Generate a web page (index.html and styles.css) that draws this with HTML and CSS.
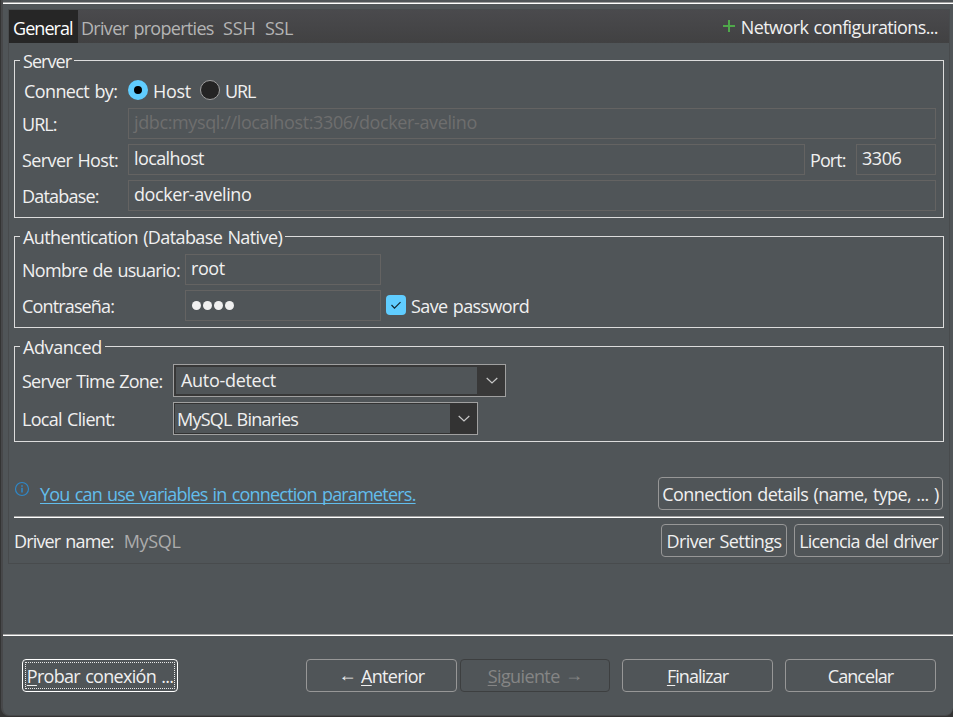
FILE: index.html
```html
<!DOCTYPE html>
<html lang="es">
<head>
<meta charset="utf-8">
<title>Connection settings</title>
<link rel="stylesheet" href="styles.css">
</head>
<body>
<div class="window">
  <div class="rule"></div>
  <main class="panel">
    <nav class="tabs">
      <span class="tab active t9">General</span>
      <span class="tab props t6">Driver properties</span>
      <span class="tab ssh t1">SSH</span>
      <span class="tab ssl t4">SSL</span>
      <span class="network">
        <svg class="plus" width="13" height="13" viewBox="0 0 13 13"><path d="M6 0h2v12h-2zM1 5h12v2H1z" fill="#4fa84a"/></svg>
        <span class="t5">Network configurations...</span>
      </span>
    </nav>
    <div class="content">
      <fieldset class="server">
        <legend class="t9">Server</legend>
        <div class="row connect">
          <span class="label t5">Connect by:</span>
          <span class="radio on"></span><span class="choice t3">Host</span>
          <span class="radio"></span><span class="choice t10">URL</span>
        </div>
        <div class="row">
          <span class="label t9">URL:</span>
          <span class="field disabled t3">jdbc:mysql://localhost:3306/docker-avelino</span>
        </div>
        <div class="row">
          <span class="label t5">Server Host:</span>
          <span class="field t5">localhost</span>
          <span class="port-label t9">Port:</span>
          <span class="field port t4">3306</span>
        </div>
        <div class="row">
          <span class="label t7">Database:</span>
          <span class="field t4">docker-avelino</span>
        </div>
      </fieldset>
      <fieldset class="auth">
        <legend class="t5">Authentication (Database Native)</legend>
        <div class="row">
          <span class="label t6">Nombre de usuario:</span>
          <span class="field t4">root</span>
        </div>
        <div class="row">
          <span class="label t8">Contraseña:</span>
          <span class="field password"><i></i><i></i><i></i><i></i></span>
          <span class="check"><svg width="20" height="20" viewBox="0 0 20 20"><path d="M5.5 10l3 3.2 6-6" fill="none" stroke="#12262e" stroke-width="1.2"/></svg></span>
          <span class="save t5">Save password</span>
        </div>
      </fieldset>
      <fieldset class="advanced">
        <legend class="t4">Advanced</legend>
        <div class="row">
          <span class="label t7">Server Time Zone:</span>
          <span class="combo zone"><span class="value t3">Auto-detect</span><svg width="12" height="8" viewBox="0 0 12 8"><path d="M.7 1l5.3 5 5.3-5" fill="none" stroke="#c8c8c8" stroke-width="1.2"/></svg></span>
        </div>
        <div class="row">
          <span class="label t6">Local Client:</span>
          <span class="combo client"><span class="value t7">MySQL Binaries</span><svg width="12" height="8" viewBox="0 0 12 8"><path d="M.7 1l5.3 5 5.3-5" fill="none" stroke="#c8c8c8" stroke-width="1.2"/></svg></span>
        </div>
      </fieldset>
      <div class="hint">
        <svg class="info" width="16" height="16" viewBox="0 0 16 16"><circle cx="8" cy="8" r="6.5" fill="none" stroke="#2f88c8" stroke-width="1.2"/><path d="M8 4.2v1.6M8 6.8v4.8" stroke="#2f88c8" stroke-width="1.6"/></svg>
        <a class="link t7">You can use variables in connection parameters.</a>
        <span class="button details t5">Connection details (name, type, ... )</span>
      </div>
      <div class="rule"></div>
      <div class="driver">
        <span class="t8">Driver name:</span>
        <span class="name t3">MySQL</span>
        <span class="button settings t5">Driver Settings</span>
        <span class="button license t7">Licencia del driver</span>
      </div>
    </div>
  </main>
  <div class="rule bottom-rule"></div>
  <footer class="footer">
    <span class="button test t6"><span><u>P</u>robar conexión ...</span></span>
    <span class="button wide prev t6"><span><span class="arrow">←</span> <u>A</u>nterior</span></span>
    <span class="button next t5"><span><u>S</u>iguiente <span class="arrow">→</span></span></span>
    <span class="button wide finish t9"><span><u>F</u>inalizar</span></span>
    <span class="button wide t9">Cancelar</span>
  </footer>
</div>
</body>
</html>
```
FILE: styles.css
```css
* { box-sizing: border-box; }
body {
  margin: 0;
  width: 953px;
  height: 717px;
  overflow: hidden;
  background: #343434;
  color: #f0f0f0;
  font: 18px/25px "Open Sans", "Noto Sans", sans-serif;
  white-space: nowrap;
  word-spacing: 1.2px;
}
.window {
  display: flex;
  flex-direction: column;
  height: 716px;
  margin-left: 1px;
  padding-top: 2px;
  background: #505558;
  border: solid #47484a;
  border-width: 0 0 1px 2px;
  border-radius: 0 0 8px 8px;
}
.rule {
  flex: none;
  height: 2px;
  background: #fff;
  border-top: 1px solid #a2a2a2;
}
/* Tracking steps */
.t1 { letter-spacing: -.12px; }
.t3 { letter-spacing: -.3px; }
.t4 { letter-spacing: -.42px; }
.t5 { letter-spacing: -.61px; }
.t6 { letter-spacing: -.7px; }
.t7 { letter-spacing: -.79px; }
.t8 { letter-spacing: -.85px; }
.t9 { letter-spacing: -.95px; }
.t10 { letter-spacing: -1.1px; }

.panel {
  flex: none;
  width: 942px;
  height: 555px;
  margin: 5px 0 0 5px;
  border: 1px solid #484b4d;
}
.tabs {
  display: flex;
  height: 33px;
  line-height: 36px;
  background: linear-gradient(#4a4a4d, #414142);
  color: #b4b4b4;
}
.tab.active { width: 69px; padding-left: 4px; background: #262626; color: #fff; }
.tab.props { width: 141px; padding-left: 3px; }
.tab.ssh { width: 42px; padding-left: 4px; }
.tab.ssl { padding-left: 4px; }
.network { display: flex; margin-left: auto; padding-right: 11px; color: #f0f0f0; line-height: 35px; }
.plus { margin: 10px 6px 0 0; }

.content { padding: 5px 5px 0 5px; }
fieldset {
  min-width: 0;
  margin: 0 0 6px;
  padding: 0 7px;
  border: 1px solid #dcdcdc;
}
legend { margin-left: -2px; padding: 2px 3px 0; line-height: 23px; }
.server { height: 170px; }
.auth { height: 104px; }
.advanced { height: 108px; }
.row { display: flex; align-items: center; height: 31px; margin-bottom: 5px; }
.label { flex: none; padding-top: 2px; }
.server .label { width: 106px; }
.auth .label { width: 163px; }
.advanced .label { width: 151px; }
.row.connect { height: 34px; margin-bottom: 1px; }
.connect .label { padding-left: 2px; }
.radio {
  width: 20px;
  height: 20px;
  border: 1px solid #a0a0a0;
  border-radius: 50%;
  background: #242424;
}
.radio.on { border: 6px solid #60cdff; background: #000; }
.choice { padding: 2px 0 0 5px; }
.choice + .radio { margin-left: 9px; }
.field {
  flex: 1;
  height: 31px;
  padding: 0 5px;
  border: 1px solid #646362;
  line-height: 27px;
}
.field.disabled { color: #6e6e6e; letter-spacing: -.38px; }
.port-label { width: 51px; padding: 2px 0 0 5px; }
.field.port { flex: none; width: 80px; }
.auth .row:nth-of-type(1) { margin-top: 5px; }
.auth .field { flex: none; width: 196px; }
.password { display: flex; align-items: center; gap: 2px; padding-left: 6px; }
.password i { width: 9px; height: 9px; border-radius: 50%; background: #f0f0f0; }
.check {
  display: flex;
  width: 20px;
  height: 20px;
  margin: -1px 0 0 5px;
  border-radius: 4px;
  background: #60cdff;
}
.save { padding: 2px 0 0 5px; }
.advanced .row { height: 33px; }
.advanced .row:nth-of-type(1) { margin-top: 5px; }
.combo {
  display: flex;
  align-items: center;
  height: 33px;
  padding-right: 7px;
  border: 1px solid #a0a0a0;
  background: #333;
}
.zone { width: 333px; background: #383838; }
.client { width: 305px; }
.value { flex: 1; margin-right: 8px; background: #505558; }
.zone .value { height: 27px; margin: 0 9px 0 2px; padding-left: 5px; line-height: 27px; }
.client .value { height: 29px; margin-left: 1px; padding-left: 2px; line-height: 31px; }

.hint { display: flex; height: 68px; padding-top: 29px; }
.info { margin-top: 4px; }
.link { margin: 5px 0 0 10px; color: #62bdec; text-decoration: underline; text-underline-offset: 2px; text-decoration-thickness: 1px; text-decoration-skip-ink: none; }
.button {
  height: 33px;
  border: 1px solid #979797;
  border-radius: 4px;
  line-height: 33px;
  text-align: center;
}
.details { width: 285px; margin: 0 1px 0 auto; }
.driver { display: flex; height: 45px; padding-top: 6px; line-height: 35px; }
.name { margin-left: 10px; color: #acacac; }
.settings { width: 126px; margin-left: auto; }
.license { width: 149px; margin: 0 1px 0 7px; }
.bottom-rule { margin-top: 70px; }
.footer { display: flex; padding: 23px 0 0 19px; }
.test { width: 156px; border-color: #fff; position: relative; }
.test::after { content: ""; position: absolute; inset: 2px; border: 1px dotted #e8e8e8; }
.wide { width: 151px; }
.prev { margin-left: 128px; }
.next { width: 150px; margin-left: 3px; border-color: #3d3f40; color: #858585; }
.finish { margin: 0 12px; }
.arrow { display: inline-block; transform: translateY(-2px); }
u { text-underline-offset: 2px; text-decoration-thickness: 1px; }
```
